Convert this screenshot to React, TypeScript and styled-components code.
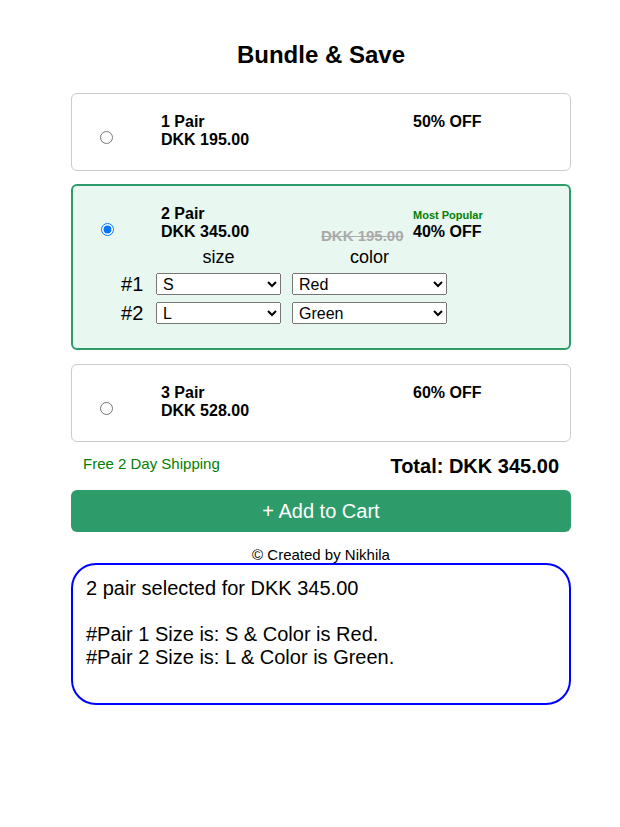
import React, { useState } from 'react'
import styled, { createGlobalStyle, css } from 'styled-components'

const GlobalStyle = createGlobalStyle`
    body {
        margin: 0;
        background: #fff;
        color: #000;
        font-family: "Liberation Sans", Arial, sans-serif;
    }
`;

const Page = styled.div`
    padding: 41px 49px 40px 71px;
`;

const Wrapper = styled.div`
    width: 500px;
`;

const Title = styled.h1`
    margin: 0 0 24px;
    font-size: 24px;
    font-weight: bold;
    text-align: center;
`;

const Card = styled.div<{ $active: boolean }>`
    box-sizing: border-box;
    border: 1px solid #cccccc;
    border-radius: 6px;
    padding: 19px 0 21px;
    margin-bottom: 13px;
    background: #fff;
    cursor: pointer;

    ${p => p.$active && css`
        border: 2px solid #2e9c6a;
        background: #e8f7ef;
        padding-bottom: 24px;
        margin-bottom: 14px;
    `}
`;

const TopRow = styled.div<{ $active: boolean }>`
    display: grid;
    grid-template-columns: ${p => (p.$active ? '88px' : '89px')} 160px 92px 1fr;
    font-size: 16px;
    font-weight: bold;
`;

const RadioCell = styled.div`
    padding-left: 28px;
`;

const Radio = styled.input`
    margin: 18px 0 0;
    width: 13px;
    height: 13px;
`;

const Info = styled.div`
    line-height: normal;
`;

const OldPrice = styled.div`
    margin-top: 22px;
    font-size: 15px;
    color: #aaaaaa;
    text-decoration: line-through;
`;

const Offer = styled.div``;

const Badge = styled.span`
    font-size: 11px;
    color: green;
`;

const Options = styled.div`
    display: grid;
    grid-template-columns: 24px 125px 155px;
    column-gap: 11px;
    row-gap: 7px;
    margin: 1px 0 0 48px;
    font-size: 18px;
    align-items: center;
`;

const Heading = styled.div`
    margin-top: 3px;
    line-height: 18px;
    text-align: center;
`;

const PairLabel = styled.div`
    font-size: 20px;
    line-height: 22px;
    white-space: nowrap;
`;

const Select = styled.select`
    width: 100%;
    height: 22px;
    font-family: "Liberation Sans", Arial, sans-serif;
    font-size: 16px;
    padding: 0 2px;
`;

const Footer = styled.div`
    display: flex;
    justify-content: space-between;
    align-items: center;
    padding: 0 12px;
    margin: 9px 0 12px;
`;

const Shipping = styled.div`
    font-size: 15px;
    color: green;
    margin-bottom: 6px;
`;

const Total = styled.div`
    font-size: 20px;
    font-weight: bold;
`;

const CartButton = styled.button`
    display: block;
    width: 100%;
    height: 42px;
    border: none;
    border-radius: 6px;
    background: #2e9c6a;
    color: #fff;
    font-family: "Liberation Sans", Arial, sans-serif;
    font-size: 20px;
    cursor: pointer;
`;

const Credit = styled.div`
    margin: 14px 0 0;
    text-align: center;
    font-size: 15px;
`;

const Summary = styled.div`
    box-sizing: border-box;
    height: 142px;
    border: 2px solid #0000ff;
    border-radius: 25px;
    padding: 12px 13px;
    font-size: 20px;
    line-height: 23px;
`;

interface Bundle {
    pairs: number;
    price: string;
    old?: string;
    off: string;
    popular?: boolean;
}

const bundles: Bundle[] = [
    { pairs: 1, price: '195.00', off: '50% OFF' },
    { pairs: 2, price: '345.00', old: '195.00', off: '40% OFF', popular: true },
    { pairs: 3, price: '528.00', off: '60% OFF' },
];

const sizes = ['S', 'M', 'L', 'XL'];
const colors = ['Red', 'Green', 'Blue', 'Black'];

type Pair = { size: string; color: string };

const defaults: Pair[] = [
    { size: 'S', color: 'Red' },
    { size: 'L', color: 'Green' },
    { size: 'M', color: 'Blue' },
];

const App = () => {
    const [selected, setSelected] = useState(1);
    const [pairs, setPairs] = useState<Pair[]>(defaults);

    const current = bundles[selected];

    const update = (i: number, key: keyof Pair, value: string) => {
        setPairs(prev => prev.map((p, idx) => (idx === i ? { ...p, [key]: value } : p)));
    };

    return (
        <Page>
            <GlobalStyle />
            <Wrapper>
                <Title>Bundle &amp; Save</Title>

                {bundles.map((b, i) => {
                    const active = i === selected;
                    return (
                        <Card key={b.pairs} $active={active} onClick={() => setSelected(i)}>
                            <TopRow $active={active}>
                                <RadioCell>
                                    <Radio
                                        type="radio"
                                        name="bundle"
                                        checked={active}
                                        onChange={() => setSelected(i)}
                                    />
                                </RadioCell>
                                <Info>
                                    {b.pairs} Pair
                                    <br />
                                    DKK {b.price}
                                </Info>
                                <div>{b.old && <OldPrice>DKK {b.old}</OldPrice>}</div>
                                <Offer>
                                    {b.popular && (
                                        <div>
                                            <Badge>Most Popular</Badge>
                                        </div>
                                    )}
                                    {b.off}
                                </Offer>
                            </TopRow>

                            {active && (
                                <Options onClick={e => e.stopPropagation()}>
                                    <span />
                                    <Heading>size</Heading>
                                    <Heading>color</Heading>
                                    {pairs.slice(0, b.pairs).map((p, n) => (
                                        <React.Fragment key={n}>
                                            <PairLabel>#{n + 1}</PairLabel>
                                            <Select value={p.size} onChange={e => update(n, 'size', e.target.value)}>
                                                {sizes.map(s => <option key={s}>{s}</option>)}
                                            </Select>
                                            <Select value={p.color} onChange={e => update(n, 'color', e.target.value)}>
                                                {colors.map(c => <option key={c}>{c}</option>)}
                                            </Select>
                                        </React.Fragment>
                                    ))}
                                </Options>
                            )}
                        </Card>
                    );
                })}

                <Footer>
                    <Shipping>Free 2 Day Shipping</Shipping>
                    <Total>Total: DKK {current.price}</Total>
                </Footer>

                <CartButton>+ Add to Cart</CartButton>

                <Credit>© Created by Nikhila</Credit>

                <Summary>
                    {current.pairs} pair selected for DKK {current.price}
                    <br />
                    <br />
                    {pairs.slice(0, current.pairs).map((p, n) => (
                        <div key={n}>
                            #Pair {n + 1} Size is: {p.size} &amp; Color is {p.color}.
                        </div>
                    ))}
                </Summary>
            </Wrapper>
        </Page>
    );
};

export default App;
